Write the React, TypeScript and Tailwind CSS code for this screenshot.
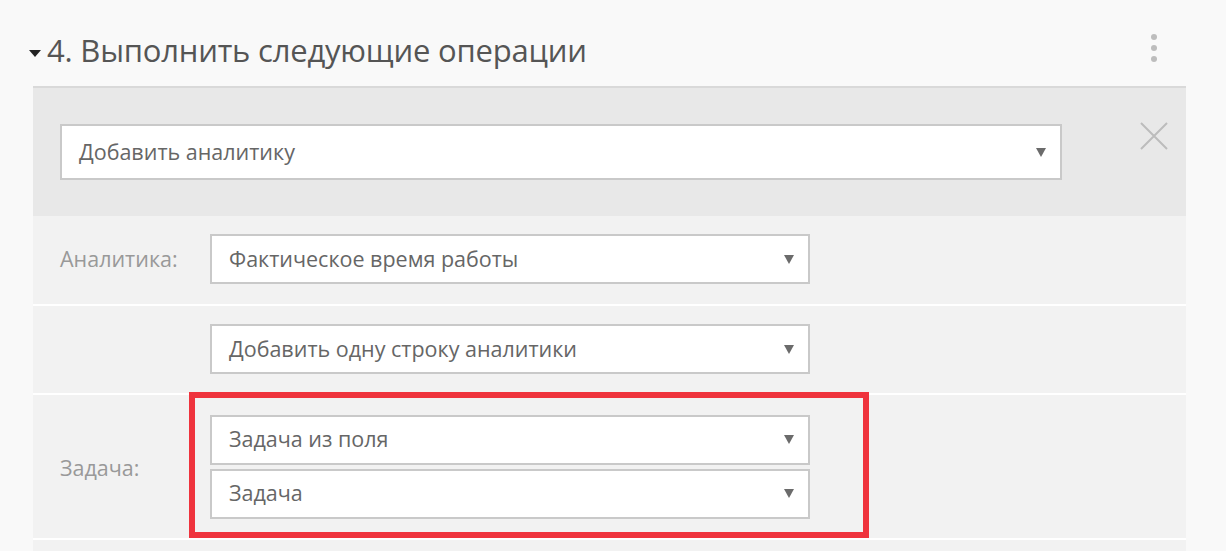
import React from "react";

const font = { fontFamily: '"Open Sans", "Noto Sans", sans-serif' };

function Arrow() {
  return (
    <svg width="10" height="9" viewBox="0 0 10 9" className="shrink-0">
      <path d="M0 0 L10 0 L5 9 Z" fill="#6b6b6b" />
    </svg>
  );
}

function Select({ text, className = "" }: { text: string; className?: string }) {
  return (
    <div
      className={`flex items-center justify-between bg-white border-2 border-[#c9c9c9] pl-[17px] pr-[14px] text-[21.5px] text-[#666] ${className}`}
    >
      <span>{text}</span>
      <Arrow />
    </div>
  );
}

export default function App() {
  return (
    <div className="w-[1226px] h-[551px] overflow-hidden bg-[#f9f9f9]" style={font}>
      <div className="pl-[33px] w-[1186px]">
        {/* header */}
        <div className="h-[86px] flex items-center justify-between">
          <div className="flex items-center -ml-[4px] pt-[14px]">
            <svg width="12" height="7" viewBox="0 0 12 7" className="mr-[6px] mt-[6px]">
              <path d="M0 0 L12 0 L6 7 Z" fill="#222" />
            </svg>
            <span className="text-[31px] text-[#555] tracking-[-0.2px]">4. Выполнить следующие операции</span>
          </div>
          <div className="flex flex-col gap-[5px] mr-[29px] pt-[10px]">
            <span className="block w-[6px] h-[6px] rounded-full bg-[#bdbdbd]" />
            <span className="block w-[6px] h-[6px] rounded-full bg-[#bdbdbd]" />
            <span className="block w-[6px] h-[6px] rounded-full bg-[#bdbdbd]" />
          </div>
        </div>

        {/* gray add-analytics block */}
        <div className="border-t-2 border-[#d9d9d9] bg-[#e8e8e8] h-[130px] flex items-start pt-[36px] pl-[27px]">
          <Select text="Добавить аналитику" className="w-[1002px] h-[56px]" />
          <svg width="28" height="28" viewBox="0 0 28 28" className="ml-[78px] -mt-[2px]">
            <path d="M1 1 L27 27 M27 1 L1 27" stroke="#bcbcbc" strokeWidth="2" />
          </svg>
        </div>

        {/* rows */}
        <div className="flex flex-col gap-[2px] bg-white">
          <div className="bg-[#f2f2f2] h-[88px] flex items-start pt-[18px] pl-[27px]">
            <div className="w-[150px] h-[50px] flex items-center text-[21.5px] text-[#999]">Аналитика:</div>
            <Select text="Фактическое время работы" className="w-[600px] h-[50px]" />
          </div>
          <div className="bg-[#f2f2f2] h-[87px] flex items-start pt-[18px] pl-[27px]">
            <div className="w-[150px]" />
            <Select text="Добавить одну строку аналитики" className="w-[600px] h-[50px]" />
          </div>
          <div className="bg-[#f2f2f2] h-[143px] flex items-center pl-[27px] relative">
            <div className="w-[150px] text-[21.5px] text-[#999] pt-[4px]">Задача:</div>
            <div className="flex flex-col gap-[4px]">
              <Select text="Задача из поля" className="w-[600px] h-[50px]" />
              <Select text="Задача" className="w-[600px] h-[50px]" />
            </div>
            <div className="absolute left-[156px] top-[-3px] w-[680px] h-[146px] border-[6px] border-[#ef333d] pointer-events-none" />
          </div>
          <div className="bg-[#f2f2f2] h-[40px]" />
        </div>
      </div>
    </div>
  );
}
